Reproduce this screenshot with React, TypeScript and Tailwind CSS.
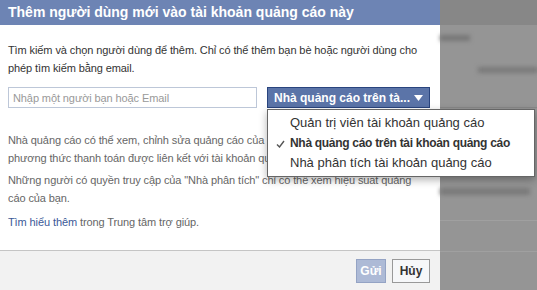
import React from "react";

export default function App() {
  const font = { fontFamily: '"Liberation Sans", Arial, sans-serif' };
  return (
    <div className="relative flex h-[290px] w-[537px] overflow-hidden" style={font}>
      {/* dialog */}
      <div className="flex h-[290px] w-[440px] shrink-0 flex-col bg-white">
        <div className="flex h-[25px] items-center bg-[#6d84b4] px-[8px] text-[14px] font-bold text-white">
          Thêm người dùng mới vào tài khoản quảng cáo này
        </div>
        <div className="flex-1 px-[8px] pt-[16px] text-[11px] leading-[18px] tracking-[-0.1px] text-[#333]">
          <p>Tìm kiếm và chọn người dùng để thêm. Chỉ có thể thêm bạn bè hoặc người dùng cho phép tìm kiếm bằng email.</p>
          <div className="mt-[10px] flex items-center gap-[10px]">
            <div className="flex h-[21px] w-[249px] items-center border border-[#bdc7d8] px-[4px] text-[11px] text-[#999]">
              Nhập một người bạn hoặc Email
            </div>
            <div className="flex h-[21px] w-[163px] items-center justify-between border border-[#29447e] bg-[#5b74a8] pl-[6px] pr-[6px] text-[12px] font-bold tracking-normal text-white">
              <span>Nhà quảng cáo trên tà...</span>
              <svg width="9" height="6" viewBox="0 0 9 6"><path d="M0 0h9L4.5 6z" fill="#fff" /></svg>
            </div>
          </div>
          <p className="mt-[23px] text-[#666]">Nhà quảng cáo có thể xem, chỉnh sửa quảng cáo của bạn và sử dụng các<br />phương thức thanh toán được liên kết với tài khoản quảng cáo.</p>
          <p className="mt-[4px] text-[#666]">Những người có quyền truy cập của "Nhà phân tích" chỉ có thể xem hiệu suất quảng<br />cáo của bạn.</p>
          <p className="mt-[6px] text-[#666]"><span className="text-[#3b5998]">Tìm hiểu thêm</span> trong Trung tâm trợ giúp.</p>
        </div>
        <div className="flex h-[40px] items-center justify-end gap-[6px] border-t border-[#c5c5c5] bg-[#f2f2f2] pr-[10px]">
          <div className="flex h-[24px] w-[30px] items-center justify-center border border-[#94a3c4] bg-[#adbad6] text-[12px] font-bold text-white">Gửi</div>
          <div className="flex h-[24px] w-[38px] items-center justify-center border border-[#999] bg-[#f6f7f9] text-[12px] font-bold text-[#333]">Hủy</div>
        </div>
      </div>
      {/* blurred background */}
      <div className="relative flex-1 bg-[#959595]">
        <div className="h-[25px] bg-[#878787]" />
        <div className="mt-[10px] h-[6px] w-[30px] bg-[#777] blur-[2px]" />
        <div className="ml-[38px] mt-[26px] h-[6px] w-[60px] bg-[#7a7a7a] blur-[2px]" />
        <div className="mt-[34px] h-[1px] bg-[#888]" />
        <div className="mt-[80px] h-[7px] w-[90px] bg-[#7a7a7a] blur-[2px]" />
        <div className="mt-[25px] h-[1px] bg-[#a0a0a0]" />
        <div className="mt-[30px] h-[1px] bg-[#a0a0a0]" />
      </div>
      {/* menu */}
      <div className="absolute left-[267px] top-[109px] w-[268px] whitespace-nowrap border border-[#666] bg-white py-[3px] text-[13px] leading-[20px] text-[#333] shadow-[0_3px_8px_rgba(0,0,0,0.3)]">
        <div className="pl-[22px]">Quản trị viên tài khoản quảng cáo</div>
        <div className="relative pl-[22px] text-[12px] font-bold tracking-[-0.3px]">
          <svg className="absolute left-[8px] top-[7px]" width="9" height="8" viewBox="0 0 9 8"><path d="M1 4.5l2.5 2.5L8 1" stroke="#555" strokeWidth="1.4" fill="none" /></svg>
          Nhà quảng cáo trên tài khoản quảng cáo
        </div>
        <div className="pl-[22px]">Nhà phân tích tài khoản quảng cáo</div>
      </div>
    </div>
  );
}
